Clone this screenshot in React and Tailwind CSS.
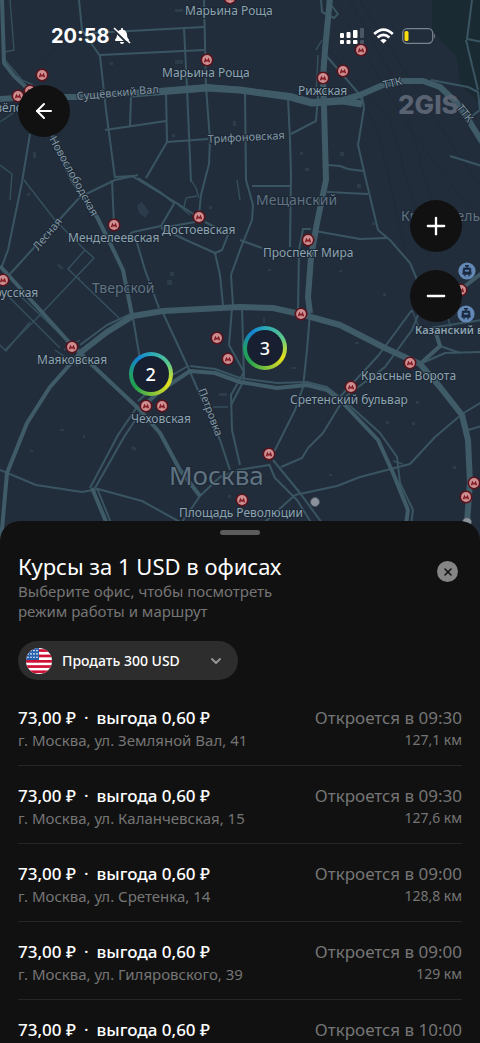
import React, { useState } from "react";
import { FaBell } from "react-icons/fa";
import { ArrowLeft, ChevronDown, Minus, Plus, X } from "lucide-react";

const wideRoads = [
	"M0 99 L30 97 L77 97 L160 91 L207 87 L240 90 L290 96 L312 102 L343 100 L360 95 L383 85 L402 81 L423 81 L440 87 L457 103 L468 119 L482 142",
	"M80 353 L107 332 L133 316 L163 311 L240 307 L273 308 L300 314 L340 325 L387 349 L420 364 L440 387 L462 415 L468 440 L470 483 L467 522",
	"M330 -2 L325 50 L323 77 L324 107 L326 180 L317 223 L311 257 L308 297 L310 313",
];

const mainRoads = [
	"M2 0 L4 63 L14 76 L27 88 L34 100",
	"M34 100 L50 130 L72 180 L97 217 L110 243 L123 270 L132 315",
	"M0 266 L10 277 L40 310 L67 340 L90 363 L140 410 L160 433 L180 470 L200 496",
	"M80 353 L50 387 L27 423 L7 473 L1 541",
	"M140 409 L160 391 L190 371 L215 373 L240 382 L277 388 L307 385 L327 390 L343 403 L378 440 L393 473 L408 510 L406 524",
	"M92 488 L107 524",
	"M460 290 L482 273",
	"M420 364 L440 346 L435 330",
];

const streets = [
	"M80 345 L107 325 L133 313",
	"M137 407 L118 435 L90 488",
	"M140 413 L124 437 L95 488",
	"M97 488 L111 523",
	"M190 366 L215 369 L240 378 L277 383 L307 382 L327 387 L348 404 L380 433 L397 457 L400 483 L413 510 L411 524",
	"M138 401 L160 382 L188 366",
	"M79 0 L82 30 L100 56 L106 110 L115 178",
	"M204 0 L206 87 L210 140 L209 164 L201 195 L199 215",
	"M100 55 L204 50",
	"M92 33 L204 27",
	"M184 28 L187 88 L191 182",
	"M166 92 L167 142 L146 178",
	"M167 142 L208 139",
	"M105 130 L166 121",
	"M131 96 L130 126",
	"M30 134 L22 182 L8 250 L2 266",
	"M10 274 L80 197 L115 180 L138 175",
	"M112 180 L114 225",
	"M115 177 L132 176 L175 202 L198 217",
	"M138 178 L160 192 L174 203",
	"M175 202 L161 226 L133 232 L118 242",
	"M161 228 L195 222",
	"M161 228 L186 240 L215 253 L222 250 L228 235 L215 227 L205 222",
	"M215 253 L220 275 L223 305",
	"M233 305 L231 275 L240 250 L252 220 L253 205 L246 180 L245 93",
	"M135 236 L145 270 L159 308",
	"M163 313 L188 367 L200 395 L220 440 L230 470",
	"M133 318 L141 365",
	"M232 308 L229 345 L244 372 L231 395 L232 430 L240 465",
	"M244 380 L231 405",
	"M242 308 L244 378",
	"M310 313 L307 350 L303 387 L295 410 L270 460",
	"M288 98 L290 140 L291 175 L290 247",
	"M291 134 L316 121 L318 96",
	"M362 96 L364 108 L358 145 L366 180 L378 230 L390 240 L410 263 L418 282",
	"M323 52 L360 95 L364 106",
	"M321 0 L322 12 L334 18 L338 14 L327 0",
	"M327 192 L368 194",
	"M328 165 L340 166 L348 169 L363 171",
	"M315 231 L360 239 L388 238",
	"M298 312 L299 250 L303 229 L311 229",
	"M252 186 L290 186",
	"M240 240 L262 248",
	"M337 400 L378 356 L412 310",
	"M345 397 L385 367 L412 330 L420 310",
	"M420 364 L445 353 L480 352",
	"M440 346 L460 353",
	"M430 328 L482 320",
	"M340 405 L323 433 L308 448 L302 458 L281 467",
	"M295 495 L337 486 L360 477 L410 464 L435 437 L462 414 L482 402",
	"M468 430 L482 426",
	"M269 464 L275 478 L297 500 L312 524",
	"M273 460 L300 493 L322 523",
	"M182 522 L200 496 L220 477 L238 470 L269 465",
	"M265 522 L295 495",
	"M0 470 L36 485 L82 492 L98 489 L142 501 L180 522",
	"M431 80 L468 87 L478 92 L480 110 L468 119",
	"M472 0 L467 39 L482 42",
	"M466 40 L478 90",
	"M450 156 L482 166",
];

const lanes = [
	"M10 0 L14 50 L5 52",
	"M5 60 L22 80 L33 85",
	"M24 180 L55 220 L85 250 L68 269 L120 319",
	"M85 250 L94 258 L40 315 L5 350",
	"M2 290 L60 348",
	"M14 290 L75 348",
	"M0 345 L6 351 L30 322",
	"M0 165 L12 174 L10 200",
	"M0 122 L20 108",
	"M64 350 L80 340",
	"M191 180 L196 188 L199 198",
	"M176 203 L190 215",
	"M184 207 L186 198 L197 196",
	"M237 180 L240 200",
	"M55 350 L78 366",
	"M213 407 L228 407",
	"M316 50 L322 40",
	"M318 55 L316 96",
	"M412 310 L420 330",
	"M448 318 L452 332",
	"M393 461 L403 464",
];

// faint railway tracks in the north-east
const rails = [
	"M330 50 L390 120 L430 260",
	"M338 60 L378 130 L405 250",
	"M345 20 L410 130 L470 210",
	"M350 0 L400 90 L440 230",
	"M360 0 L455 150 L480 185",
	"M40 60 Q70 40 90 12",
];

const blocks = [
	"M175 9 h8 v3 h-8z", "M137 205 l5 -3 l7 10 l-4 6 l-6 -5z", "M58 263 l6 5 l-3 2 l-4 -5z",
	"M167 280 h5 v5 h-5z", "M170 272 h4 v4 h-4z", "M175 60 h8 v4 h-8z", "M77 277 h3 v3 h-3z",
	"M110 62 h3 v3 h-3z", "M33 152 h3 v6 h-3z", "M172 134 h3 v3 h-3z", "M233 121 h3 v5 h-3z",
	"M219 393 h8 v3 h-8z", "M132 446 l5 2 l-2 3 l-4 -3z", "M60 429 h4 v2 h-4z", "M30 450 h3 v2 h-3z",
	"M357 184 h4 v4 h-4z", "M372 222 h3 v3 h-3z", "M339 270 h3 v2 h-3z", "M268 269 h3 v2 h-3z",
	"M383 293 h3 v3 h-3z", "M355 342 h4 v2 h-4z", "M263 317 h2 v6 h-2z", "M292 367 h4 v2 h-4z",
	"M416 401 h3 v3 h-3z", "M386 421 h3 v3 h-3z", "M412 422 h3 v3 h-3z", "M453 466 h3 v3 h-3z",
	"M329 474 h3 v2 h-3z", "M305 168 h4 v3 h-4z", "M340 152 h4 v4 h-4z", "M300 152 h3 v3 h-3z",
	"M83 435 h2 v3 h-2z", "M228 495 h3 v3 h-3z", "M27 193 h3 v3 h-3z", "M209 206 h3 v3 h-3z",
];

const metro = [
	[42, 75], [18, 96], [30, 91], [207, 60], [230, -2], [323, 78], [343, 71], [361, 50],
	[114, 225], [199, 217], [308, 240], [3, 280], [72, 347], [301, 314], [217, 338],
	[228, 359], [410, 363], [351, 387], [146, 406], [162, 406], [269, 454], [242, 500],
	[474, 483], [466, 497], [461, 290],
];

const labels = [
	{ x: 185, y: 15, text: "Марьина Роща" },
	{ x: 162, y: 77, text: "Марьина Роща" },
	{ x: 298, y: 95, text: "Рижская" },
	{ x: 68, y: 242, text: "Менделеевская" },
	{ x: 162, y: 234, text: "Достоевская" },
	{ x: 263, y: 257, text: "Проспект Мира" },
	{ x: -34, y: 297, text: "Белорусская" },
	{ x: 37, y: 364, text: "Маяковская" },
	{ x: 131, y: 423, text: "Чеховская" },
	{ x: 361, y: 380, text: "Красные Ворота" },
	{ x: 290, y: 404, text: "Сретенский бульвар" },
	{ x: 179, y: 517, text: "Площадь Революции" },
	{ x: -19, y: 112, text: "Савёловская" },
];

const streetLabels = [
	{ x: 77, y: 100, angle: -5, text: "Сущёвский Вал" },
	{ x: 208, y: 143, angle: -3, text: "Трифоновская" },
	{ x: 384, y: 89, angle: -14, text: "ТТК" },
	{ x: 456, y: 108, angle: 52, text: "ТТК" },
	{ x: 49, y: 139, angle: 61, text: "Новослободская" },
	{ x: 38, y: 251, angle: -50, text: "Лесная" },
	{ x: 198, y: 390, angle: 69, text: "Петровка" },
];

const offices = [
	{ id: 1, rate: "73,00 ₽", profit: "0,60 ₽", address: "г. Москва, ул. Земляной Вал, 41", opens: "09:30", distance: "127,1 км" },
	{ id: 2, rate: "73,00 ₽", profit: "0,60 ₽", address: "г. Москва, ул. Каланчевская, 15", opens: "09:30", distance: "127,6 км" },
	{ id: 3, rate: "73,00 ₽", profit: "0,60 ₽", address: "г. Москва, ул. Сретенка, 14", opens: "09:00", distance: "128,8 км" },
	{ id: 4, rate: "73,00 ₽", profit: "0,60 ₽", address: "г. Москва, ул. Гиляровского, 39", opens: "09:00", distance: "129 км" },
	{ id: 5, rate: "73,00 ₽", profit: "0,60 ₽", address: "г. Москва, ул. Щепкина, 32", opens: "10:00", distance: "129,3 км" },
];

const MetroPin = ({ x, y }) => (
	<g transform={`translate(${x} ${y})`}>
		<circle r="6.5" fill="#5a1119" />
		<circle r="4.9" fill="#cb8e91" />
		<path d="M-3.2 2.3 L-1.7 -2.2 L0 0.4 L1.7 -2.2 L3.2 2.3 H1.4 L1.2 0.6 L0 2.2 L-1.2 0.6 L-1.4 2.3z" fill="#80151f" />
	</g>
);

const TramPin = ({ x, y }) => (
	<g transform={`translate(${x} ${y})`}>
		<circle r="8.6" fill="#6488b5" />
		<path d="M-3.6 -3 H3.6 L4.2 3.2 H-4.2z M-2.4 -1.6 V1 H2.4 V-1.6z" fill="#1b2a40" fillRule="evenodd" stroke="#1b2a40" strokeWidth="0.8" />
		<path d="M-2 -5.2 H2 M0 -5 V-3 M-2 3.5 V5.2 M2 3.5 V5.2" stroke="#1b2a40" strokeWidth="1.4" />
	</g>
);

const CityMap = () => (
	<svg
		viewBox="0 0 480 541"
		className="block h-auto w-full bg-[#222d3c] font-['Noto_Sans','Open_Sans',sans-serif]"
		role="img"
		aria-label="Карта Москвы"
	>
		<path d="M432 0 H480 V104 L460 84 L457 58 L432 30z" fill="#1a2a32" />
		<g fill="#2d3c4b">
			{blocks.map((d) => <path key={d} d={d} />)}
		</g>
		<g fill="none" stroke="#1f2938" strokeWidth="1">
			{rails.map((d) => <path key={d} d={d} />)}
		</g>
		<g fill="none" strokeLinejoin="round">
			<g stroke="#35505d" strokeWidth="1.4">
				{lanes.map((d) => <path key={d} d={d} />)}
			</g>
			<g stroke="#3a5562" strokeWidth="2">
				{streets.map((d) => <path key={d} d={d} />)}
			</g>
			<g stroke="#3f5b68" strokeWidth="4">
				{mainRoads.map((d) => <path key={d} d={d} />)}
			</g>
			<g stroke="#3f5b68" strokeWidth="6">
				{wideRoads.map((d) => <path key={d} d={d} />)}
			</g>
			<path d="M132 94 L207 88 L240 90 L290 97 L312 103 L343 101 L362 104" stroke="#3f5b68" strokeWidth="7" />
		</g>

		{/* District and city names */}
		<g fill="#5f7381" stroke="#1d2735" strokeWidth="2" paintOrder="stroke">
			<text x="92" y="293" fontSize="14">Тверской</text>
			<text x="256" y="205" fontSize="14">Мещанский</text>
			<text x="401" y="221" fontSize="14">Красносельский</text>
			<text x="169" y="485" fontSize="26">Москва</text>
		</g>

		<text x="398" y="114" fontSize="26" fontWeight="800" fontFamily="Inter, sans-serif" fill="#596271">2GIS</text>

		{metro.map(([x, y]) => <MetroPin key={`${x}-${y}`} x={x} y={y} />)}
		<TramPin x={467} y={271} />
		<TramPin x={466} y={314} />
		<circle cx="315" cy="502" r="4.5" fill="#8c9299" stroke="#4a5563" strokeWidth="1" />
		<circle cx="467" cy="522" r="4.5" fill="#8c9299" stroke="#4a5563" strokeWidth="1" />

		<g fill="#8ba3ae" fontSize="12" stroke="#1d2735" strokeWidth="2" paintOrder="stroke">
			{labels.map((l) => (
				<text key={`${l.x}-${l.y}`} x={l.x} y={l.y}>{l.text}</text>
			))}
			<text x="415" y="334" fontSize="11" fontWeight="600">Казанский вокзал</text>
		</g>
		<g fill="#8198a3" fontSize="11" stroke="#1d2735" strokeWidth="2" paintOrder="stroke">
			{streetLabels.map((l) => (
				<text key={`${l.x}-${l.y}`} transform={`translate(${l.x} ${l.y}) rotate(${l.angle})`}>{l.text}</text>
			))}
		</g>
	</svg>
);

const StatusBar = () => (
	<div className="absolute inset-x-0 top-0 flex items-center justify-between pt-6 pr-11 pl-[51px] text-white">
		<div className="flex items-center gap-1">
			<span className="font-['Inter',sans-serif] text-xl leading-6 font-bold">20:58</span>
			<span className="relative">
				<FaBell className="size-4" />
				<svg viewBox="0 0 18 18" className="absolute -inset-px size-[18px]">
					<path d="M1 3 L16 18" stroke="#222d3c" strokeWidth="2" />
					<path d="M1 1 L17 16" stroke="#fff" strokeWidth="1.6" />
				</svg>
			</span>
		</div>
		<div className="flex items-center gap-2">
			<svg viewBox="0 0 25 17" className="h-[17px] w-[25px]" fill="#fff">
				<rect x="0" y="5" width="4" height="5" rx="1" />
				<rect x="6.5" y="4" width="4" height="6" rx="1" />
				<rect x="13" y="2" width="4.5" height="8" rx="1" />
				<rect x="20" y="0" width="4" height="10" rx="1" fill="#4b5563" />
				<rect x="0" y="12" width="4" height="4" rx="1" />
				<rect x="6.5" y="12" width="4" height="4" rx="1" />
				<rect x="13" y="12" width="4.5" height="4" rx="1" />
				<rect x="20" y="12" width="4" height="4" rx="1" fill="#4b5563" />
			</svg>
			<svg viewBox="0 0 21 16" className="h-4 w-[21px]" fill="none" stroke="#fff" strokeWidth="2.7">
				<path d="M1.2 6 Q10.5 -2.6 19.8 6" />
				<path d="M4.6 9.6 Q10.5 4.2 16.4 9.6" />
				<path d="M10.5 15.4 L7.4 12.4 Q10.5 9.8 13.6 12.4z" fill="#fff" stroke="none" />
			</svg>
			<svg viewBox="0 0 34 16" className="h-4 w-[34px]">
				<rect x="0.7" y="0.7" width="30" height="14.6" rx="4.5" fill="none" stroke="#7a828e" strokeWidth="1.3" />
				<rect x="2.5" y="3" width="4" height="10" rx="1.5" fill="#fbdc0c" />
				<path d="M32 5.5 q2 2.5 0 5z" fill="#7a828e" />
			</svg>
		</div>
	</div>
);

const RoundButton = ({ label, children }) => (
	<button
		type="button"
		aria-label={label}
		className="flex size-[52px] items-center justify-center rounded-full bg-[#111111] text-white"
	>
		{children}
	</button>
);

const Cluster = ({ count, className }) => (
	<button
		type="button"
		aria-label={`Офисов: ${count}`}
		className={`absolute size-11 -translate-x-1/2 -translate-y-1/2 rounded-full bg-[conic-gradient(from_0deg,#2aa7b8,#5cc98f_60deg,#a8d84a_90deg,#e6e01c_120deg,#8cc63a_170deg,#21a050_230deg,#1f9e6a_270deg,#1483d4_320deg,#2aa7b8)] p-1 ${className}`}
	>
		<span className="flex size-9 items-center justify-center rounded-full bg-[#171f30] text-lg leading-6 font-medium text-white">
			{count}
		</span>
	</button>
);

const UsFlag = () => (
	<svg viewBox="0 0 26 26" className="pointer-events-none absolute top-1/2 left-2 size-[26px] -translate-y-1/2">
		<defs>
			<clipPath id="flag"><circle cx="13" cy="13" r="13" /></clipPath>
		</defs>
		<g clipPath="url(#flag)">
			<rect width="26" height="26" fill="#fff" />
			{[1.2, 6.6, 12, 17.2, 22.4].map((y) => (
				<rect key={y} y={y} width="26" height="2.7" fill="#cf1136" />
			))}
			<rect width="13" height="12" fill="#2560ad" />
			{[2, 5, 8, 11].map((x) =>
				[2, 5.3, 8.6].map((y) => <circle key={`${x}-${y}`} cx={x} cy={y + 0.6} r="0.8" fill="#fff" />)
			)}
		</g>
	</svg>
);

const App = () => {
	const [operation, setOperation] = useState("sell");

	return (
		<main className="flex h-screen flex-col overflow-hidden bg-[#111111] font-['Noto_Sans','Open_Sans',sans-serif] text-white">
			<section className="relative shrink-0">
				<CityMap />
				<StatusBar />
				<Cluster count={2} className="top-[69.2%] left-[31.4%]" />
				<Cluster count={3} className="top-[64.4%] left-[55.2%]" />
				<div className="absolute top-[85px] left-[18px]">
					<RoundButton label="Назад"><ArrowLeft size={24} /></RoundButton>
				</div>
				<div className="absolute top-[200px] right-[18px] flex flex-col gap-[18px]">
					<RoundButton label="Приблизить"><Plus size={28} /></RoundButton>
					<RoundButton label="Отдалить"><Minus size={28} /></RoundButton>
				</div>
			</section>

			{/* Bottom sheet */}
			<section className="relative -mt-5 flex min-h-0 flex-1 flex-col rounded-t-[20px] bg-[#111111] px-[18px] pt-[9px]">
				<div className="mx-auto h-[5px] w-10 shrink-0 rounded-full bg-[#5c5c5c]"></div>

				<header className="flex items-start justify-between pt-4">
					<div>
						<h1 className="text-[22px] leading-[30px] font-normal">Курсы за 1 USD в офисах</h1>
						<p className="max-w-64 text-[15px] leading-5 text-[#757575]">
							Выберите офис, чтобы посмотреть режим работы и маршрут
						</p>
					</div>
					<button
						type="button"
						aria-label="Закрыть"
						className="mt-[10px] mr-1 flex size-[21px] items-center justify-center rounded-full bg-[#858585] text-[#111111]"
					>
						<X size={12} strokeWidth={3} />
					</button>
				</header>

				<div className="relative mt-5 w-[220px] shrink-0">
					<UsFlag />
					<select
						aria-label="Операция"
						value={operation}
						onChange={(e) => setOperation(e.target.value)}
						className="h-[39px] w-full appearance-none rounded-full bg-[#2d2d2d] pr-10 pl-11 text-sm font-medium text-white"
					>
						<option value="sell">Продать 300 USD</option>
						<option value="buy">Купить 300 USD</option>
					</select>
					<ChevronDown size={16} strokeWidth={3} className="pointer-events-none absolute top-1/2 right-[14px] -translate-y-1/2 text-[#959595]" />
				</div>

				<ul className="mt-2 min-h-0 flex-1 overflow-y-auto [scrollbar-width:none]">
					{offices.map((office) => (
						<li key={office.id} className="flex justify-between border-b border-[#262626] pt-[18px] pb-[15px]">
							<div>
								<p className="flex gap-2 text-[17px] leading-6 font-medium">
									<span>{office.rate}</span>
									<span>·</span>
									<span>выгода {office.profit}</span>
								</p>
								<p className="text-[15px] leading-5 text-[#757575]">{office.address}</p>
							</div>
							<div className="text-right text-[#757575]">
								<p className="text-[17px] leading-6">Откроется в {office.opens}</p>
								<p className="text-sm leading-5">{office.distance}</p>
							</div>
						</li>
					))}
				</ul>
			</section>
		</main>
	);
};

export default App;
